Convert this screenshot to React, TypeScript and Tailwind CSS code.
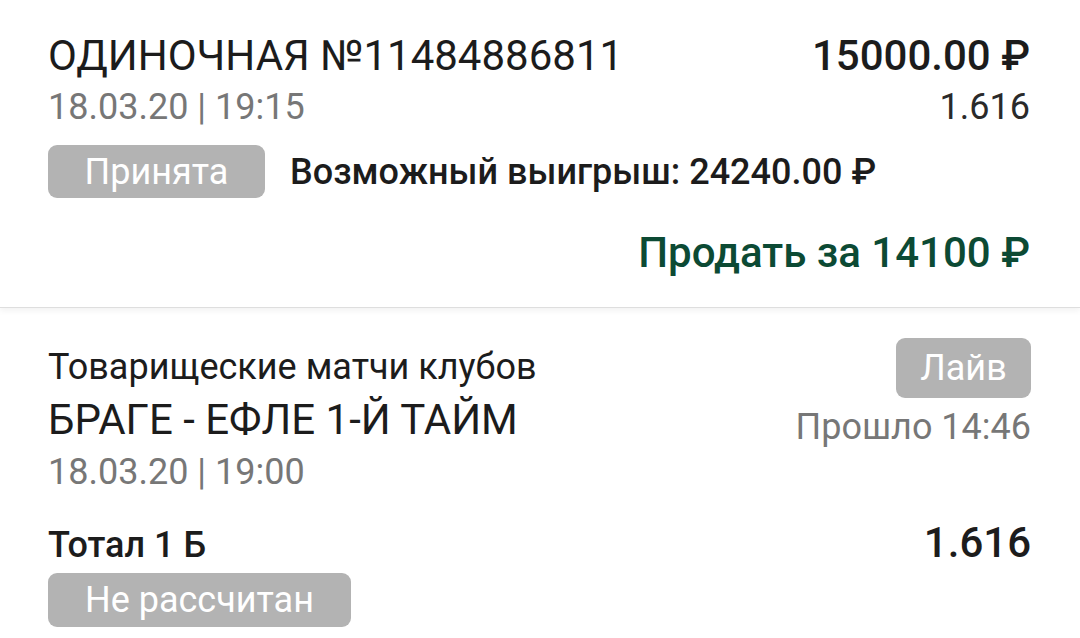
const FONT = "font-['Roboto',sans-serif]";

function Badge({ label, className }: { label: string; className: string }) {
  return (
    <span
      className={`inline-flex items-center justify-center rounded-[9px] bg-[#b3b3b3] text-[36px] leading-none text-white ${className}`}
    >
      {label}
    </span>
  );
}

export default function App() {
  return (
    <div className={`h-[638px] w-[1080px] overflow-hidden bg-white ${FONT}`}>
      <section className="relative border-b border-[#dedede] pb-[29px] pl-[48px] pr-[50px] pt-[30px] shadow-[0_3px_6px_rgba(0,0,0,0.05)]">
        <div className="flex items-baseline justify-between">
          <span className="text-[42px] leading-[52px] text-[#1c1c1c]">ОДИНОЧНАЯ №11484886811</span>
          <span className="text-[42px] font-medium leading-[52px] text-[#1c1c1c]">15000.00 ₽</span>
        </div>
        <div className="flex items-baseline justify-between">
          <span className="text-[36px] leading-[50px] text-[#777777]">18.03.20 | 19:15</span>
          <span className="text-[36px] leading-[50px] text-[#2a2a2a]">1.616</span>
        </div>
        <div className="mt-[13px] flex items-center gap-[25px]">
          <Badge label="Принята" className="h-[53px] w-[217px]" />
          <span className="text-[36px] font-medium leading-[44px] text-[#1c1c1c]">Возможный выигрыш: 24240.00 ₽</span>
        </div>
        <div className="mt-[30px] flex justify-end">
          <span className="text-[42px] font-medium leading-[50px] text-[#0c4a34]">Продать за 14100 ₽</span>
        </div>
      </section>

      <section className="pl-[48px] pr-[49px] pt-[30px]">
        <div className="flex justify-between">
          <div className="mt-[5px] flex flex-col">
            <span className="text-[36px] leading-[48px] text-[#1c1c1c]">Товарищеские матчи клубов</span>
            <span className="text-[42px] leading-[58px] text-[#1c1c1c]">БРАГЕ - ЕФЛЕ 1-Й ТАЙМ</span>
            <span className="text-[36px] leading-[46px] text-[#777777]">18.03.20 | 19:00</span>
          </div>
          <div className="flex flex-col items-end">
            <Badge label="Лайв" className="h-[60px] w-[135px]" />
            <span className="mt-[4px] text-[36px] leading-[50px] text-[#777777]">Прошло 14:46</span>
          </div>
        </div>
        <div className="mt-[24px] flex items-baseline justify-between">
          <span className="text-[36px] font-medium leading-[48px] text-[#1c1c1c]">Тотал 1 Б</span>
          <span className="text-[42px] font-medium leading-[48px] text-[#1c1c1c]">1.616</span>
        </div>
        <Badge label="Не рассчитан" className="mt-[4px] h-[54px] w-[303px]" />
      </section>
    </div>
  );
}
